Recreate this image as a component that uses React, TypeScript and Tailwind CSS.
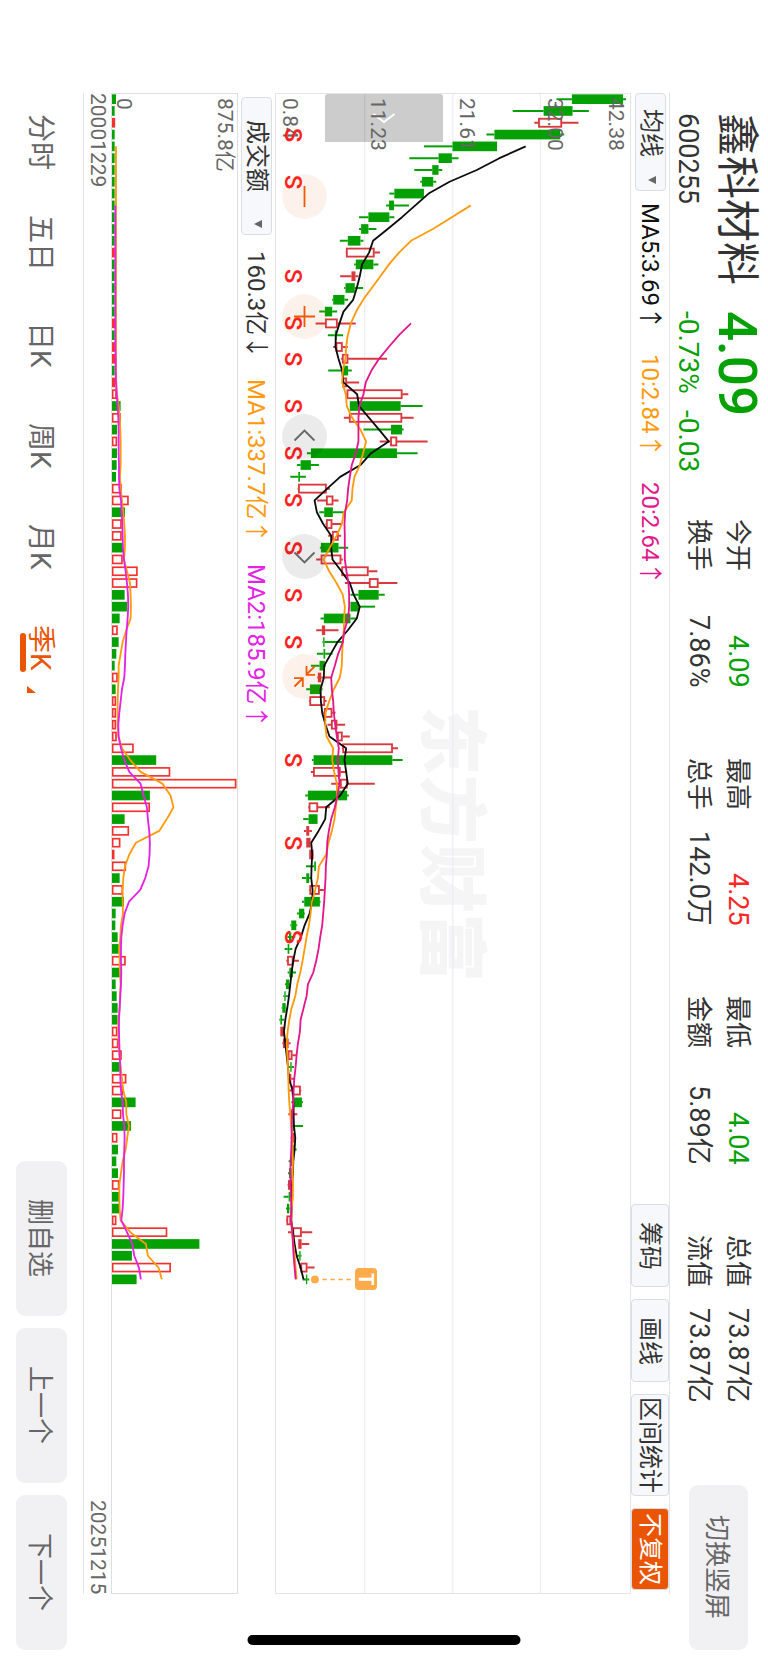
import React from "react";

type Candle = [up: 0 | 1 | 2, low: number, from: number, to: number, high: number];

const GREEN = "#04a004";
const CANDLE_RED = "#d9383e";
const VOLUME_RED = "#f5302f";

/* Chart space: one unit is a third of a pixel, quarters run down the long side. */
const PITCH = 35.43;
const FIRST = 15.5;
const LENGTH = 4500;
const PRICE_SPAN = 1065;
const VOLUME_SPAN = 376;
const at = (i: number) => FIRST + PITCH * i;

/* 0 = falling, 1 = rising (outlined), 2 = rising (solid) */
const candles: Candle[] = [
  [0, 844, 890, 1044, 1053], [0, 712, 805, 892, 941], [1, 777, 789, 860, 910], [0, 633, 657, 855, 867],
  [0, 445, 531, 665, 665], [0, 401, 489, 529, 549], [0, 416, 470, 489, 500], [0, 434, 439, 473, 482],
  [0, 341, 356, 445, 445], [0, 331, 340, 355, 400], [0, 250, 278, 341, 356], [0, 250, 256, 278, 302],
  [0, 192, 216, 254, 263], [1, 210, 211, 296, 313], [0, 235, 240, 293, 308], [2, 193, 227, 239, 248],
  [0, 205, 209, 237, 262], [0, 169, 172, 206, 217], [0, 130, 147, 169, 184], [1, 119, 148, 185, 240],
  [0, 156, 177, 182, 202], [1, 172, 180, 200, 216], [1, 196, 199, 217, 334], [0, 157, 201, 217, 228],
  [1, 198, 200, 213, 250], [1, 210, 213, 380, 398], [0, 222, 222, 375, 441], [1, 204, 220, 379, 414],
  [0, 263, 346, 379, 384], [1, 312, 344, 364, 456], [0, 93, 105, 364, 426], [0, 63, 74, 105, 129],
  [0, 43, 67, 72, 90], [1, 65, 67, 152, 162], [1, 124, 151, 172, 188], [0, 130, 145, 171, 204],
  [1, 149, 151, 169, 197], [1, 157, 169, 188, 196], [0, 132, 135, 188, 217], [1, 121, 135, 196, 201],
  [1, 196, 197, 278, 305], [1, 207, 280, 308, 365], [0, 224, 248, 309, 327], [0, 224, 224, 250, 298],
  [0, 134, 144, 224, 242], [2, 121, 138, 148, 188], [0, 140, 142, 146, 204], [0, 123, 143, 148, 170],
  [0, 105, 131, 147, 150], [2, 124, 126, 136, 169], [0, 91, 102, 136, 140], [1, 99, 101, 147, 152],
  [1, 142, 145, 169, 179], [1, 155, 166, 184, 208], [1, 183, 184, 200, 222], [1, 198, 200, 351, 367],
  [0, 108, 113, 350, 381], [1, 105, 112, 194, 214], [1, 166, 193, 215, 297], [0, 88, 96, 214, 219],
  [1, 97, 99, 126, 162], [0, 82, 98, 125, 125], [2, 84, 91, 100, 108], [2, 90, 91, 104, 104],
  [2, 99, 100, 113, 113], [0, 90, 115, 120, 120], [0, 78, 91, 100, 108], [1, 99, 101, 131, 144],
  [0, 78, 85, 132, 134], [0, 63, 69, 85, 87], [0, 43, 46, 61, 64], [0, 34, 39, 46, 58],
  [0, 26, 35, 40, 49], [1, 31, 34, 52, 69], [0, 35, 40, 51, 60], [0, 27, 30, 40, 42],
  [0, 22, 25, 29, 38], [0, 17, 19, 29, 32], [0, 10, 13, 18, 24], [2, 13, 13, 24, 24],
  [2, 19, 21, 38, 44], [1, 32, 36, 49, 60], [0, 36, 43, 47, 54], [2, 36, 39, 46, 57],
  [1, 39, 48, 74, 76], [0, 46, 55, 78, 81], [2, 37, 44, 52, 64], [0, 46, 50, 54, 81],
  [2, 44, 48, 56, 60], [0, 48, 51, 56, 62], [0, 38, 42, 49, 52], [0, 36, 39, 47, 48],
  [2, 35, 36, 47, 48], [0, 23, 38, 42, 48], [0, 30, 33, 40, 42], [1, 30, 32, 45, 48],
  [1, 36, 50, 77, 109], [2, 66, 67, 77, 100], [0, 60, 70, 74, 77], [1, 70, 74, 94, 116],
  [0, 80, 90, 94, 100],
];

const ma5 = [
  751, 672, 604, 522, 459, 419, 379, 336, 292, 280, 259, 252, 243, 232, 203, 191, 180, 179, 188, 199, 203, 244, 250,
  280, 310, 339, 286, 254, 193, 154, 116, 123, 142, 166, 166, 170, 197, 222, 234, 252, 243, 216, 185, 165, 145, 144,
  134, 135, 139, 149, 161, 211, 206, 211, 216, 193, 151, 148, 128, 106, 109, 107, 106, 110, 109, 101, 86, 75, 59, 52,
  47, 43, 39, 34, 28, 24, 28, 32, 36, 39, 50, 53, 53, 54, 58, 56, 52, 51, 48, 48, 47, 46, 51, 56, 62, 74, 83,
];
const ma10 = [
  586, 529, 472, 406, 370, 340, 314, 288, 262, 241, 225, 216, 211, 209, 201, 199, 210, 213, 229, 254, 271, 262, 252,
  236, 230, 228, 204, 198, 182, 162, 143, 160, 182, 201, 207, 205, 204, 201, 199, 198, 192, 174, 160, 149, 148, 152,
  172, 169, 175, 183, 184, 180, 176, 168, 158, 151, 129, 126, 118, 108, 104, 99, 92, 86, 80, 73, 64, 58, 47, 40, 35,
  32, 34, 36, 37, 38, 40, 43, 46, 49, 50, 51, 50, 51, 51, 47, 46, 48, 52, 56, 59, 62,
];
const ma20 = [
  406, 370, 339, 310, 287, 270, 263, 251, 248, 248, 248, 240, 228, 222, 217, 214, 208, 206, 207, 207, 207, 212, 218,
  220, 220, 217, 206, 201, 187, 177, 166, 168, 172, 174, 178, 183, 189, 186, 188, 191, 185, 177, 166, 159, 154, 153,
  150, 149, 147, 145, 142, 139, 133, 128, 121, 112, 96, 92, 83, 74, 72, 66, 62, 59, 55, 53, 52, 49, 47, 47, 46, 44,
  43, 44, 45, 46, 45, 49, 51, 53, 56, 59,
];

/* Turnover per quarter; negative values are falling quarters. */
const turnover = [
  -12, -8, 9, -8, -8, -8, -8, -8, -8, -8, -8, -8, -8, 8, -8, -8, -8, -8, -8, 9, -8, 9, 9, -8, 9, 14, -26, 26, -15, 15,
  -15, -14, -12, 29, 50, -39, 29, 29, -33, 32, 77, 76, -38, -46, -23, 17, -20, -13, -8, 17, -11, 12, 12, 12, 14, 65,
  -133, 175, 374, -114, 114, -38, 51, 25, 7, 42, -23, 33, -36, -11, -10, -17, -20, 41, -26, -11, -14, -17, -17, 16, 19,
  29, -23, 43, 33, -71, 28, -57, 16, -18, -13, -18, 22, -21, -22, 13, 166, -263, -60, 177, -74,
];
const turnoverMa1 = [
  12, 12, 12, 12, 12, 12, 12, 12, 12, 12, 12, 12, 12, 12, 12, 12, 12, 12, 12, 12, 13, 15, 20, 23, 25, 26, 26, 26, 24,
  26, 30, 34, 37, 39, 39, 36, 45, 54, 56, 57, 56, 43, 32, 26, 20, 20, 18, 17, 17, 17, 19, 30, 55, 86, 152, 176, 185,
  165, 142, 72, 52, 39, 34, 32, 32, 33, 27, 25, 22, 23, 24, 26, 24, 23, 19, 19, 20, 22, 26, 30, 34, 43, 43, 51, 46, 41,
  32, 27, 22, 22, 23, 26, 55, 102, 108, 140, 150,
];
const turnoverMa2 = [
  10, 10, 10, 10, 10, 10, 10, 10, 10, 10, 10, 10, 10, 11, 11, 12, 14, 17, 19, 20, 20, 20, 21, 21, 22, 27, 29, 31, 32, 33,
  36, 41, 45, 48, 49, 47, 44, 42, 40, 39, 37, 30, 26, 22, 19, 20, 27, 37, 52, 86, 95, 105, 108, 112, 114, 113, 110, 100,
  85, 51, 38, 32, 28, 27, 27, 28, 27, 25, 23, 21, 21, 22, 23, 25, 25, 27, 32, 33, 37, 38, 37, 36, 36, 35, 34, 32, 28, 45,
  61, 67, 81, 87,
];

const sellMarks = [3, 7, 15, 19, 22, 26, 30, 34, 38, 42, 46, 56, 63, 71];

const path = (values: number[], start: number) =>
  values.map((v, i) => `${v},${at(start + i).toFixed(1)}`).join(" ");

function Line({ values, start, color }: { values: number[]; start: number; color: string }) {
  return <polyline points={path(values, start)} fill="none" stroke={color} strokeWidth="5.5" strokeLinejoin="round" />;
}

function PriceSvg() {
  return (
    <svg
      className="absolute inset-0 h-full w-full"
      viewBox={`0 0 ${PRICE_SPAN} ${LENGTH}`}
      preserveAspectRatio="none"
      aria-hidden="true"
    >
      {[267, 532, 795].map((x) => (
        <line key={x} x1={x} x2={x} y1="0" y2={LENGTH} stroke="#e6e9ee" strokeWidth="3" />
      ))}
      {candles.map(([kind, low, from, to, high], i) => {
        const y = at(i);
        const color = kind === 0 ? GREEN : CANDLE_RED;
        return (
          <g key={i} stroke={color}>
            <path d={`M${low} ${y}H${from}M${to} ${y}H${high}`} strokeWidth="6" />
            {kind === 1 ? (
              <rect x={from + 2} y={y - 12} width={Math.max(to - from - 4, 2)} height="24" fill="none" strokeWidth="5.5" />
            ) : (
              <rect x={from} y={y - 14.5} width={to - from} height="29" fill={color} stroke="none" />
            )}
          </g>
        );
      })}
      <Line values={ma5} start={4} color="#0c0c0c" />
      <Line values={ma10} start={9} color="#ff9a0d" />
      <Line values={ma20} start={19} color="#e3168c" />
      <circle cx="117" cy={at(100)} r="12" fill="#ffab4a" />
      <path d={`M140 ${at(100)}H228`} stroke="#ffab4a" strokeWidth="4.5" strokeDasharray="13 11" />
    </svg>
  );
}

function TurnoverSvg() {
  return (
    <svg
      className="absolute inset-0 h-full w-full"
      viewBox={`0 0 ${VOLUME_SPAN} ${LENGTH}`}
      preserveAspectRatio="none"
      aria-hidden="true"
    >
      {turnover.map((v, i) => {
        const y = at(i);
        return v < 0 ? (
          <rect key={i} x="0" y={y - 14.5} width={-v} height="29" fill={GREEN} />
        ) : (
          <rect
            key={i}
            x="2"
            y={y - 12}
            width={Math.max(v - 4, 3)}
            height="24"
            fill={v < 11 ? VOLUME_RED : "none"}
            stroke={VOLUME_RED}
            strokeWidth="5"
          />
        );
      })}
      <Line values={turnoverMa1} start={4} color="#ff9a0d" />
      <Line values={turnoverMa2} start={9} color="#e322e6" />
    </svg>
  );
}

function Picker({ label, value, className }: { label: string; value: string; className: string }) {
  return (
    <div className={`relative flex w-[31px] flex-none rounded-[4px] border border-[#dadde3] bg-[#f6f8fb] ${className}`}>
      <select
        aria-label={label}
        defaultValue={value}
        className="h-full w-full appearance-none overflow-visible bg-transparent ps-[15px] text-[24px] leading-[29px] text-[#333] outline-none"
      >
        <option>{value}</option>
      </select>
      <svg className="pointer-events-none absolute bottom-[6px] left-[12px] h-2 w-2" viewBox="0 0 8 8" aria-hidden="true">
        <path d="M8 0V8L0 4Z" fill="#666" />
      </svg>
    </div>
  );
}

function Quote({ name, price, className }: { name: string; price: string; className: string }) {
  return (
    <div className="flex items-center justify-between">
      <span className="text-[26px] text-[#333]">{name}</span>
      <span className={`text-[27px] ${className}`}>{price}</span>
    </div>
  );
}

const quotes = [
  [["今开", "4.09", "text-[#04a004]"], ["换手", "7.86%", "text-[#333]"]],
  [["最高", "4.25", "text-[#ff2626]"], ["总手", "142.0万", "text-[#333]"]],
  [["最低", "4.04", "text-[#04a004]"], ["金额", "5.89亿", "text-[#333]"]],
  [["总值", "73.87亿", "text-[#333]"], ["流值", "73.87亿", "text-[#333]"]],
];

const tools = ["筹码", "画线", "区间统计"];
const periods = ["分时", "五日", "日K", "周K", "月K", "季K"];
const actions = ["删自选", "上一个", "下一个"];

const controls = [
  { name: "缩小", tone: "bg-[#ea5504]/8 text-[#f05a00]", d: "M22.5 12V33" },
  { name: "放大", tone: "bg-[#ea5504]/8 text-[#f05a00]", d: "M22.5 12V33M12 22.5H33" },
  { name: "左移", tone: "bg-black/8 text-[#666]", d: "M12.5 26.5L22.5 16.5L32.5 26.5" },
  { name: "右移", tone: "bg-black/8 text-[#666]", d: "M12.5 18.5L22.5 28.5L32.5 18.5" },
  { name: "收起", tone: "bg-[#ea5504]/8 text-[#f05a00]", d: "M32.5 12.5L24.5 20.5M24.5 12V20.8H33M12.5 32.5L20.5 24.5M12 24.2H20.8V33" },
];

export default function App() {
  return (
    <div className="relative flex h-screen w-full flex-col overflow-hidden bg-white font-[Roboto,'Noto_Sans_CJK_SC',sans-serif] whitespace-nowrap text-[#333] [text-orientation:sideways] [writing-mode:vertical-rl]">
      <header className="flex w-[98px] flex-none items-start ps-[113px] pe-[13px]">
        <div className="h-[198px] flex-none">
          <h1 className="text-[43px] leading-[62px]">鑫科材料</h1>
          <p className="text-[27px] leading-[36px]">600255</p>
        </div>
        <div className="h-[208px] flex-none text-[#04a004]">
          <p className="text-[53px] leading-[62px] font-medium">4.09</p>
          <p className="flex gap-4 text-[28px] leading-[36px]">
            <span>-0.73%</span>
            <span>-0.03</span>
          </p>
        </div>
        <div className="me-[82px] mr-[11px] grid flex-1 grid-cols-4 gap-[70px] leading-[39px]">
          {quotes.map((column) => (
            <div key={column[0][0]}>
              {column.map(([name, price, tone]) => (
                <Quote key={name} name={name} price={price} className={tone} />
              ))}
            </div>
          ))}
        </div>
        <button className="mr-[20px] h-[165px] w-[59px] flex-none rounded-[9px] bg-[#f1f1f4] pr-1 text-center text-[26px] text-[#666]">
          切换竖屏
        </button>
      </header>

      <main className="mt-[93px] mb-[69px] flex min-w-0 flex-1 flex-col">
        <div className="flex w-[39px] flex-none items-center border-r border-[#e3e5e8] text-[24px]">
          <Picker label="指标" value="均线" className="h-[98px]" />
          <div className="ms-[12px] flex flex-1 gap-6">
            <span className="text-[#111]">MA5:3.69↑</span>
            <span className="text-[#ff9a0d]">10:2.84↑</span>
            <span className="text-[#e3168c]">20:2.64↑</span>
          </div>
          <div className="me-1 flex gap-3 self-stretch">
            {tools.map((tool) => (
              <button
                key={tool}
                className={`rounded-[4px] border border-[#dadde3] bg-[#f6f8fb] text-center text-[#333] ${tool.length > 2 ? "h-[102px]" : "h-[83px]"}`}
              >
                {tool}
              </button>
            ))}
            <button className="h-[82px] rounded-[4px] border border-[#dadde3] bg-[#ea5504] text-center text-white">
              不复权
            </button>
          </div>
        </div>

        <section className="relative min-w-0 flex-[357] border border-[#e3e5e8]" aria-label="季K线">
          <div className="absolute inset-0 flex items-center justify-center pr-1 text-[69px] leading-none font-black text-[#f5f5f6]">
            东方财富
          </div>
          <PriceSvg />
          <div className="absolute top-0 left-[49px] flex h-[48px] w-[118px] items-center justify-center rounded-t-[3px] bg-black/20">
            <svg className="h-6 w-6" viewBox="0 0 24 24" fill="none" stroke="#fff" strokeWidth="2" aria-hidden="true">
              <path d="M1.5 8L12 16L22.5 8" />
            </svg>
          </div>
          <div className="absolute inset-0 flex flex-col ps-1 text-[21px] leading-[28px] text-[#666]">
            <div className="flex min-w-0 flex-1 flex-col justify-between">
              <span>42.38</span>
              <span>32.00</span>
            </div>
            {["21.61", "11.23", "0.84"].map((price) => (
              <div key={price} className="flex min-w-0 flex-1 flex-col justify-end">
                <span>{price}</span>
              </div>
            ))}
          </div>
          {sellMarks.map((i) => (
            <span
              key={i}
              className="absolute left-1 w-[26px] -translate-y-1/2 text-[24px] leading-[26px] font-medium text-[#ff2020]"
              style={{ top: `${(at(i) / LENGTH) * 100}%` }}
            >
              S
            </span>
          ))}
          <div className="absolute top-[80px] left-[6px] flex gap-[75px]">
            {controls.map(({ name, tone, d }) => (
              <button key={name} aria-label={name} className={`h-[45px] w-[45px] rounded-full ${tone}`}>
                <svg viewBox="0 0 45 45" className="h-full w-full" fill="none" stroke="currentColor" strokeWidth="1.8">
                  <path d={d} />
                </svg>
              </button>
            ))}
          </div>
          <span
            className="absolute left-[79px] flex h-[22px] w-[22px] -translate-y-1/2 items-center justify-center rounded-[4px] bg-[#ffab4a] text-[20px] leading-[22px] font-bold text-white"
            style={{ top: `${(at(100) / LENGTH) * 100}%` }}
          >
            T
          </span>
        </section>

        <div className="flex w-[37px] flex-none items-center ps-1 text-[24px]">
          <Picker label="副图指标" value="成交额" className="h-[138px] ps-[7px]" />
          <div className="ms-[16px] flex gap-5">
            <span>160.3亿↓</span>
            <span className="text-[#ff9a0d]">MA1:337.7亿↑</span>
            <span className="text-[#e322e6]">MA2:185.9亿↑</span>
          </div>
        </div>

        <section className="relative min-w-0 flex-[126] border border-[#dcdee2]" aria-label="成交额">
          <TurnoverSvg />
          <div className="absolute inset-0 flex flex-col justify-between ps-1 text-[21px] leading-[24px] text-[#666]">
            <span>875.8亿</span>
            <span>0</span>
          </div>
        </section>

        <div className="flex w-[28px] flex-none justify-between border-l border-[#e3e5e8] text-[21px] leading-[27px] text-[#666]">
          <span>20001229</span>
          <span>20251215</span>
        </div>
      </main>

      <footer className="flex w-[83px] flex-none items-center ps-[92px] pe-[13px]">
        <nav className="mr-1 flex flex-1">
          {periods.map((period) => {
            const active = period === "季K";
            return (
              <button
                key={period}
                className={`relative h-[101px] text-center text-[28px] leading-[40px] ${active ? "text-[#ea5504]" : "text-[#666]"}`}
              >
                {period}
                {active && (
                  <>
                    <span className="absolute top-[36px] left-0 h-[39px] w-[6px] rounded-full bg-[#ea5504]" />
                    <svg className="absolute top-[89px] left-[7px] h-[7px] w-[9px]" viewBox="0 0 9 7" aria-hidden="true">
                      <path d="M0 0V7H9Z" fill="#ea5504" />
                    </svg>
                  </>
                )}
              </button>
            );
          })}
        </nav>
        <div className="flex gap-3">
          {actions.map((action) => (
            <button
              key={action}
              className="h-[155px] w-[51px] rounded-[9px] bg-[#f1f1f4] pr-1 text-center text-[26px] text-[#666]"
            >
              {action}
            </button>
          ))}
        </div>
      </footer>

      <div className="absolute bottom-[18px] left-1/2 h-[10px] w-[273px] -translate-x-1/2 rounded-full bg-black" />
    </div>
  );
}
